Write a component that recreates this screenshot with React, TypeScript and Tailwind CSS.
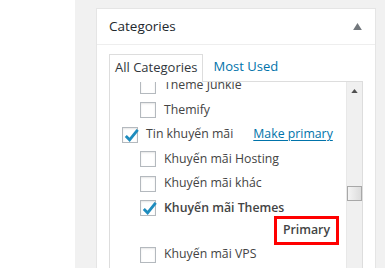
import { useState } from 'react';

type Cat = { name: string; child?: boolean; checked?: boolean; primary?: boolean; makePrimary?: boolean };

const cats: Cat[] = [
  { name: 'Theme Junkie', child: true },
  { name: 'Themify', child: true },
  { name: 'Tin khuyến mãi', checked: true, makePrimary: true },
  { name: 'Khuyến mãi Hosting', child: true },
  { name: 'Khuyến mãi khác', child: true },
  { name: 'Khuyến mãi Themes', child: true, checked: true, primary: true },
  { name: 'Khuyến mãi VPS', child: true },
];

const Checkbox = ({ checked }: { checked?: boolean }) => (
  <span className="relative flex h-[16px] w-[16px] shrink-0 items-center justify-center border border-[#b4b9be] bg-white shadow-[inset_0_1px_2px_rgba(0,0,0,0.1)]">
    {checked && (
      <svg viewBox="0 0 20 20" className="absolute left-[-1px] top-[-2px] h-[19px] w-[19px]">
        <path d="M4 10.5 L8 14.5 L16.5 4" fill="none" stroke="#1e8cbe" strokeWidth="3" />
      </svg>
    )}
  </span>
);

export default function App() {
  const [tab] = useState('all');

  return (
    <div
      className="flex h-[268px] w-[385px] overflow-hidden bg-white text-[13px] text-[#444]"
      style={{ fontFamily: '"Open Sans", "Noto Sans", sans-serif' }}
    >
      <div className="w-[75px] shrink-0 bg-white" />
      <div className="flex-1 bg-[#f1f1f1] pl-[21px] pt-[8px]">
        <div className="h-[300px] w-[280px] border border-[#e5e5e5] bg-white">
          <div className="flex h-[36px] items-center justify-between border-b border-[#eee] px-[12px]">
            <h2 className="text-[13.5px] text-[#23282d]">Categories</h2>
            <svg viewBox="0 0 10 8" className="mr-[1px] h-[7px] w-[9px]">
              <path d="M0 8 L5 0 L10 8 Z" fill="#72777c" />
            </svg>
          </div>

          <div className="px-[12px] pt-[9px]">
            <div className="flex items-end whitespace-nowrap">
              <div
                className={`relative z-10 -mb-px h-[28px] border border-b-0 border-[#ddd] bg-white px-[5px] pt-[3px] ${
                  tab === 'all' ? 'text-[#32373c]' : ''
                }`}
              >
                All Categories
              </div>
              <div className="h-[27px] px-[10px] pt-[3px] text-[#0073aa]">Most Used</div>
            </div>

            <div className="relative flex h-[200px] border border-[#ddd] bg-white">
              <div className="flex-1 overflow-hidden">
                <div className="-mt-[9px] flex flex-col whitespace-nowrap text-[12.3px]">
                  {cats.map((c, i) => (
                    <div key={c.name}>
                      <div
                        className={`flex items-center gap-[8px] ${i % 2 === 0 ? 'h-[25px]' : 'h-[24px]'} ${
                          c.child ? 'pl-[30px]' : 'pl-[12px]'
                        }`}
                      >
                        <Checkbox checked={c.checked} />
                        <span className={c.primary ? 'font-semibold' : ''}>{c.name}</span>
                        {c.makePrimary && (
                          <a className="ml-[12px] text-[#0073aa] underline underline-offset-2">Make primary</a>
                        )}
                      </div>
                      {c.primary && (
                        <div className="flex h-[22px] justify-end pr-[7px]">
                          <span className="-mt-[4px] flex h-[29px] items-center border-[3px] border-[#ff0000] px-[6px] font-semibold">
                            Primary
                          </span>
                        </div>
                      )}
                    </div>
                  ))}
                </div>
              </div>

              <div className="relative w-[16px] shrink-0 border-l border-[#e8e8e8] bg-[#f0f0f0]">
                <svg viewBox="0 0 8 5" className="absolute left-[4px] top-[7px] h-[4px] w-[7px]">
                  <path d="M0 5 L4 0 L8 5 Z" fill="#505050" />
                </svg>
                <div className="absolute left-[0px] top-[104px] h-[15px] w-[15px] border border-[#a8a8a8] bg-[linear-gradient(to_right,#f4f4f4,#dcdcdc)]" />
              </div>
            </div>
          </div>
        </div>
      </div>
    </div>
  );
}
